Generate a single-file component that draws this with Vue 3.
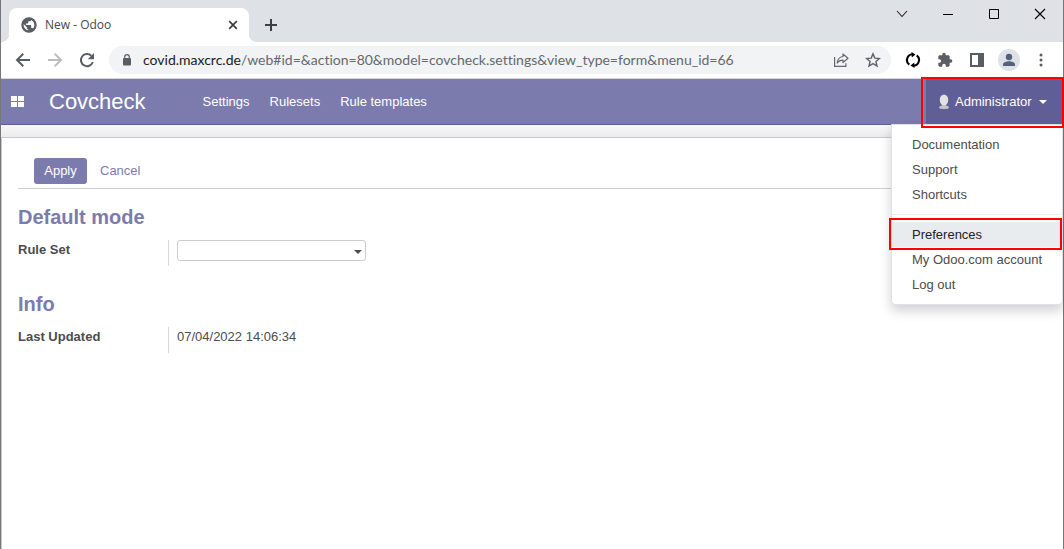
<script setup>
import { ref } from 'vue'

const appMenus = ['Settings', 'Rulesets', 'Rule templates']
const helpLinks = ['Documentation', 'Support', 'Shortcuts']
const accountLinks = ['Preferences', 'My Odoo.com account', 'Log out']
const ruleSet = ref('')
</script>

<template>
  <div class="window">
    <div class="tab-strip">
      <div class="tab">
        <svg width="16" height="16" viewBox="1 1 22 22" fill="#5a5e63">
          <path d="M12 2C6.480 2 2 6.480 2 12s4.480 10 10 10 10-4.480 10-10S17.520 2 12 2zm-1 17.930c-3.950-.49-7-3.850-7-7.930 0-.62.080-1.210.210-1.790L9 15v1c0 1.100.9 2 2 2v1.930zm6.900-2.540c-.26-.81-1-1.390-1.900-1.390h-1v-3c0-.55-.45-1-1-1H8v-2h2c.55 0 1-.45 1-1V7h2c1.100 0 2-.9 2-2v-.41c2.930 1.190 5 4.060 5 7.410 0 2.080-.8 3.970-2.100 5.390z" />
          <circle cx="12" cy="12" r="9" fill="none" stroke="#5a5e63" stroke-width="3" />
        </svg>
        <span class="tab-title">New - Odoo</span>
        <button class="icon-button" aria-label="Close tab">
          <svg width="10" height="10" viewBox="0 0 10 10"><path d="M1.200 1.200l7.600 7.600M8.800 1.200L1.200 8.800" stroke="#3c4043" stroke-width="1.700" /></svg>
        </button>
      </div>
      <button class="icon-button new-tab" aria-label="New tab">
        <svg width="12" height="12" viewBox="0 0 12 12"><path d="M6 0v12M0 6h12" stroke="#3c4043" stroke-width="2" /></svg>
      </button>
      <div class="window-controls">
        <button class="icon-button" aria-label="Search tabs">
          <svg width="12" height="12" viewBox="0 0 12 12"><path d="M1 3l5 5.500L11 3" fill="none" stroke="#222" stroke-width="1.100" /></svg>
        </button>
        <button class="icon-button" aria-label="Minimise">
          <svg width="12" height="12" viewBox="0 0 12 12"><path d="M1 6.500h10" stroke="#000" /></svg>
        </button>
        <button class="icon-button" aria-label="Maximise">
          <svg width="12" height="12" viewBox="0 0 12 12"><path d="M1.500 1.500h9v9h-9z" fill="none" stroke="#000" /></svg>
        </button>
        <button class="icon-button" aria-label="Close window">
          <svg width="12" height="12" viewBox="0 0 12 12"><path d="M1 1l10 10M11 1L1 11" stroke="#000" stroke-width="1.100" /></svg>
        </button>
      </div>
    </div>

    <div class="toolbar">
      <div class="nav-buttons">
        <button class="icon-button" aria-label="Back">
          <svg width="16" height="16" viewBox="0 0 16 16"><path d="M15 8H2.500M8.300 1.800L2 8l6.300 6.200" fill="none" stroke="#5a5e63" stroke-width="2" /></svg>
        </button>
        <button class="icon-button" aria-label="Forward">
          <svg width="16" height="16" viewBox="0 0 16 16"><path d="M1 8h12.500M7.700 1.800L14 8l-6.300 6.200" fill="none" stroke="#babcbe" stroke-width="2" /></svg>
        </button>
        <button class="icon-button" aria-label="Reload">
          <svg width="16" height="16" viewBox="0 0 16 16"><path d="M13.800 10a6.100 6.100 0 1 1-1.500-6.300" fill="none" stroke="#5a5e63" stroke-width="2" /><path d="M15 1v6.200H8.800z" fill="#5a5e63" /></svg>
        </button>
      </div>
      <div class="omnibox">
        <svg class="lock" width="10" height="12" viewBox="0 0 10 12"><rect x="1" y="4" width="8" height="7.500" rx="1" fill="#5a5e63" /><path d="M2.700 5V3a2.300 2.300 0 0 1 4.600 0v2" fill="none" stroke="#5a5e63" stroke-width="1.200" /></svg>
        <span class="url"><span class="host">covid.maxcrc.de</span>/web#id=&amp;action=80&amp;model=covcheck.settings&amp;view_type=form&amp;menu_id=66</span>
        <button class="icon-button" aria-label="Share">
          <svg width="16" height="16" viewBox="0 0 16 16" fill="none" stroke="#65696e" stroke-width="1.200"><path d="M1.600 5v9.400h11.300v-3.200" /><path d="M10 2l5 4.200-5 4.300V8.100C7.500 8 5.600 8.900 4.200 11c.3-3.400 2.200-6 5.800-6.500z" stroke-linejoin="round" /></svg>
        </button>
        <button class="icon-button" aria-label="Bookmark">
          <svg width="16" height="16" viewBox="0 0 16 16"><path d="M8 1.900l1.800 4.200 4.600.4-3.500 3 1.100 4.500L8 11.600 4 14l1.100-4.500-3.500-3 4.600-.4z" fill="none" stroke="#5f6368" stroke-width="1.400" /></svg>
        </button>
      </div>
      <div class="extensions">
        <button class="icon-button" aria-label="Sync extension">
          <svg width="16" height="16" viewBox="0 0 16 16" fill="none" stroke="#000" stroke-width="2.100"><path d="M4.300 12.700A5.800 5.800 0 0 1 7.200 2.300M11.700 3.300a5.800 5.800 0 0 1-2.900 10.400" /><path d="M6.500 0l4 2.400-3.700 3zM9.500 16l-4-2.400 3.700-3z" fill="#000" stroke="none" /></svg>
        </button>
        <button class="icon-button" aria-label="Extensions">
          <svg width="16" height="16" viewBox="0 0 24 24" fill="#5a5e63"><path d="M20.500 11H19V7c0-1.100-.9-2-2-2h-4V3.500a2.500 2.500 0 0 0-5 0V5H4c-1.100 0-2 .9-2 2v3.800h1.500a2.700 2.700 0 0 1 0 5.400H2V20c0 1.100.9 2 2 2h3.800v-1.500a2.700 2.700 0 0 1 5.400 0V22H17c1.100 0 2-.9 2-2v-4h1.500a2.500 2.500 0 0 0 0-5z" /></svg>
        </button>
        <button class="icon-button" aria-label="Side panel">
          <svg width="16" height="16" viewBox="0 0 16 16"><path d="M1 1h14v14H1zM3 3v10h6V3z" fill="#5a5e63" fill-rule="evenodd" /></svg>
        </button>
        <button class="icon-button avatar" aria-label="Profile">
          <svg width="16" height="16" viewBox="0 0 16 16" fill="#55617a"><circle cx="8" cy="5" r="3.200" /><path d="M2 14v-1.600C2 10.300 5.500 9.200 8 9.200s6 1.100 6 3.200V14z" /></svg>
        </button>
        <button class="icon-button" aria-label="Browser menu">
          <svg width="16" height="16" viewBox="0 0 16 16" fill="#5a5e63"><circle cx="8" cy="3" r="1.500" /><circle cx="8" cy="8" r="1.500" /><circle cx="8" cy="13" r="1.500" /></svg>
        </button>
      </div>
    </div>

    <header class="navbar">
      <button class="icon-button apps" aria-label="Applications">
        <svg width="13" height="11" viewBox="0 0 13 11" fill="#fff"><path d="M0 0h6v5H0zM7 0h6v5H7zM0 6h6v5H0zM7 6h6v5H7z" /></svg>
      </button>
      <a class="brand" href="#">Covcheck</a>
      <nav class="menus">
        <a v-for="menu in appMenus" :key="menu" href="#">{{ menu }}</a>
      </nav>
      <div class="user">
        <button class="user-button" aria-haspopup="true" aria-expanded="true">
          <svg width="12" height="16" viewBox="0 0 12 16"><path d="M4.300 9h3.400v2.500c2 .3 3.300 1 3.300 2.200 0 1.700-10 1.700-10 0 0-1.200 1.300-1.900 3.300-2.200z" fill="#c3c3c3" /><ellipse cx="6" cy="6" rx="4.200" ry="5.500" fill="#e2e2e2" /></svg>
          <span>Administrator</span>
          <svg class="caret" width="8" height="4" viewBox="0 0 8 4"><path d="M0 0h8L4 4z" fill="#fff" /></svg>
        </button>
        <div class="dropdown">
          <a v-for="link in helpLinks" :key="link" href="#">{{ link }}</a>
          <hr />
          <a v-for="link in accountLinks" :key="link" href="#" :class="{ active: link === 'Preferences' }">{{ link }}</a>
        </div>
      </div>
    </header>

    <main class="content">
      <form class="sheet" @submit.prevent>
        <div class="actions">
          <button class="apply" type="submit">Apply</button>
          <button class="cancel" type="button">Cancel</button>
        </div>
        <section>
          <h2>Default mode</h2>
          <div class="field">
            <label for="rule-set">Rule Set</label>
            <div class="value">
              <div class="picker">
                <input id="rule-set" v-model="ruleSet" type="text" autocomplete="off" />
                <svg class="arrow" width="8" height="4" viewBox="0 0 8 4"><path d="M0 0h8L4 4z" fill="#4c4c4c" /></svg>
              </div>
            </div>
          </div>
        </section>
        <section>
          <h2>Info</h2>
          <div class="field">
            <label for="last-updated">Last Updated</label>
            <div class="value"><output id="last-updated">07/04/2022 14:06:34</output></div>
          </div>
        </section>
      </form>
    </main>
  </div>
</template>

<style>
body {
  margin: 0;
}
</style>

<style scoped>
* {
  box-sizing: border-box;
}
.window {
  display: flex;
  flex-direction: column;
  min-height: 100vh;
  border: solid #77777a;
  border-width: 0 1px;
  background: #fff;
  color: #4c4c4c;
  font: 13px/20px "Liberation Sans", Arial, sans-serif;
}
a {
  color: inherit;
  text-decoration: none;
}
button {
  padding: 0;
  border: 0;
  background: none;
  color: inherit;
  font: inherit;
}
svg {
  display: block;
  flex: none;
}
.icon-button {
  display: flex;
  flex: none;
  align-items: center;
  justify-content: center;
}
.tab-strip {
  display: flex;
  align-items: flex-end;
  height: 42px;
  background: #dee1e6;
}
.tab {
  position: relative;
  display: flex;
  align-items: center;
  width: 240px;
  height: 34px;
  margin-left: 8px;
  padding: 0 11px 0 12px;
  border-radius: 8px 8px 0 0;
  background: #fff;
}
.tab::before,
.tab::after {
  position: absolute;
  bottom: 0;
  width: 8px;
  height: 8px;
  content: "";
}
.tab::before {
  right: 100%;
  background: radial-gradient(circle at 0 0, #dee1e6 8px, #fff 8px);
}
.tab::after {
  left: 100%;
  background: radial-gradient(circle at 100% 0, #dee1e6 8px, #fff 8px);
}
.tab-title {
  flex: 1;
  padding-left: 8px;
  color: #45484c;
  font: 12px/16px "Open Sans", "Noto Sans", sans-serif;
}
.new-tab {
  width: 28px;
  height: 34px;
  margin-left: 8px;
}
.window-controls {
  display: flex;
  align-self: flex-start;
  margin-left: auto;
}
.window-controls .icon-button {
  width: 46px;
  height: 28px;
}
.toolbar {
  display: flex;
  align-items: center;
  height: 37px;
  padding-right: 14px;
  border-bottom: 1px solid #d5d6da;
}
.nav-buttons {
  display: flex;
  gap: 16px;
  padding: 0 14px;
}
.omnibox {
  display: flex;
  flex: 1;
  align-items: center;
  gap: 16px;
  min-width: 0;
  height: 28px;
  padding: 0 10px 0 13px;
  border-radius: 14px;
  background: #f1f3f4;
}
.lock {
  margin-right: -5px;
}
.url {
  flex: 1;
  overflow: hidden;
  color: #65696e;
  font: 14px/20px Lato, "Open Sans", sans-serif;
  font-variant-ligatures: none;
  white-space: nowrap;
}
.host {
  color: #202124;
}
.extensions {
  display: flex;
  align-items: center;
  gap: 16px;
  padding-left: 14px;
}
.avatar {
  width: 22px;
  height: 22px;
  margin: 0 -3px;
  border-radius: 50%;
  background: #dee1e6;
}
.navbar {
  display: flex;
  align-items: stretch;
  height: 46px;
  border-bottom: 1px solid #5f5e97;
  background: #7c7bad;
  color: #fff;
}
.apps {
  width: 32px;
  height: 44px;
}
.brand {
  margin-left: 16px;
  font-size: 22px;
  line-height: 45px;
}
.menus {
  display: flex;
  gap: 20px;
  margin-left: 57px;
  line-height: 45px;
}
.user {
  position: relative;
  margin-left: auto;
}
.user-button {
  position: relative;
  display: flex;
  align-items: center;
  gap: 5px;
  width: 137px;
  height: 45px;
  padding-left: 12px;
  background: #5f5e97;
  white-space: nowrap;
}
.caret {
  margin-left: 2px;
}
.user-button::after,
.active::after {
  position: absolute;
  z-index: 2;
  border: 2px solid #f00;
  content: "";
  pointer-events: none;
}
.user-button::after {
  inset: -2px -1px -4px -5px;
}
.dropdown {
  position: absolute;
  top: 100%;
  right: 0;
  width: 172px;
  padding: 7px 0;
  border: 1px solid #dee2e6;
  border-radius: 0 0 4px 4px;
  background: #fff;
  box-shadow: 0 6px 12px rgba(0, 0, 0, 0.18);
  color: #4c4c4c;
}
.dropdown a {
  position: relative;
  display: block;
  padding: 0 20px;
  line-height: 25px;
  white-space: nowrap;
}
.dropdown hr {
  height: 1px;
  margin: 7px 0;
  border: 0;
  background: #e9ecef;
}
.dropdown .active {
  background: #e9ecef;
  color: #222;
}
.active::after {
  inset: -4px 0 -3px -3px;
}
.content {
  display: flex;
  flex: 1;
  padding-top: 12px;
  background: linear-gradient(#f8f8f8, #ebebeb 12px);
}
.sheet {
  flex: 1;
  padding: 20px 16px;
  border: solid #c8c8d3;
  border-width: 1px 0 0 1px;
  background: #fff;
}
.actions {
  display: flex;
  gap: 13px;
  padding: 0 16px 4px;
  border-bottom: 1px solid #d0d0d0;
}
.actions button {
  height: 26px;
}
.apply {
  width: 53px;
  border-radius: 3px;
  background: #7c7bad;
  color: #fff;
}
.cancel {
  color: #7c7bad;
}
h2 {
  margin: 16px 0 11px;
  color: #7c7bad;
  font-size: 20px;
  line-height: 24px;
}
section + section h2 {
  margin-top: 26px;
}
.field {
  display: flex;
  height: 26px;
}
.field label {
  width: 150px;
  font-weight: bold;
}
.value {
  padding-left: 8px;
  border-left: 1px solid #d8d8d8;
}
.picker {
  position: relative;
}
.picker input {
  display: block;
  width: 189px;
  height: 21px;
  padding: 0 20px 0 5px;
  border: 1px solid #ccc;
  border-radius: 3px;
  background: #fff;
  color: inherit;
  font: inherit;
}
.arrow {
  position: absolute;
  top: 10px;
  right: 4px;
}
</style>
